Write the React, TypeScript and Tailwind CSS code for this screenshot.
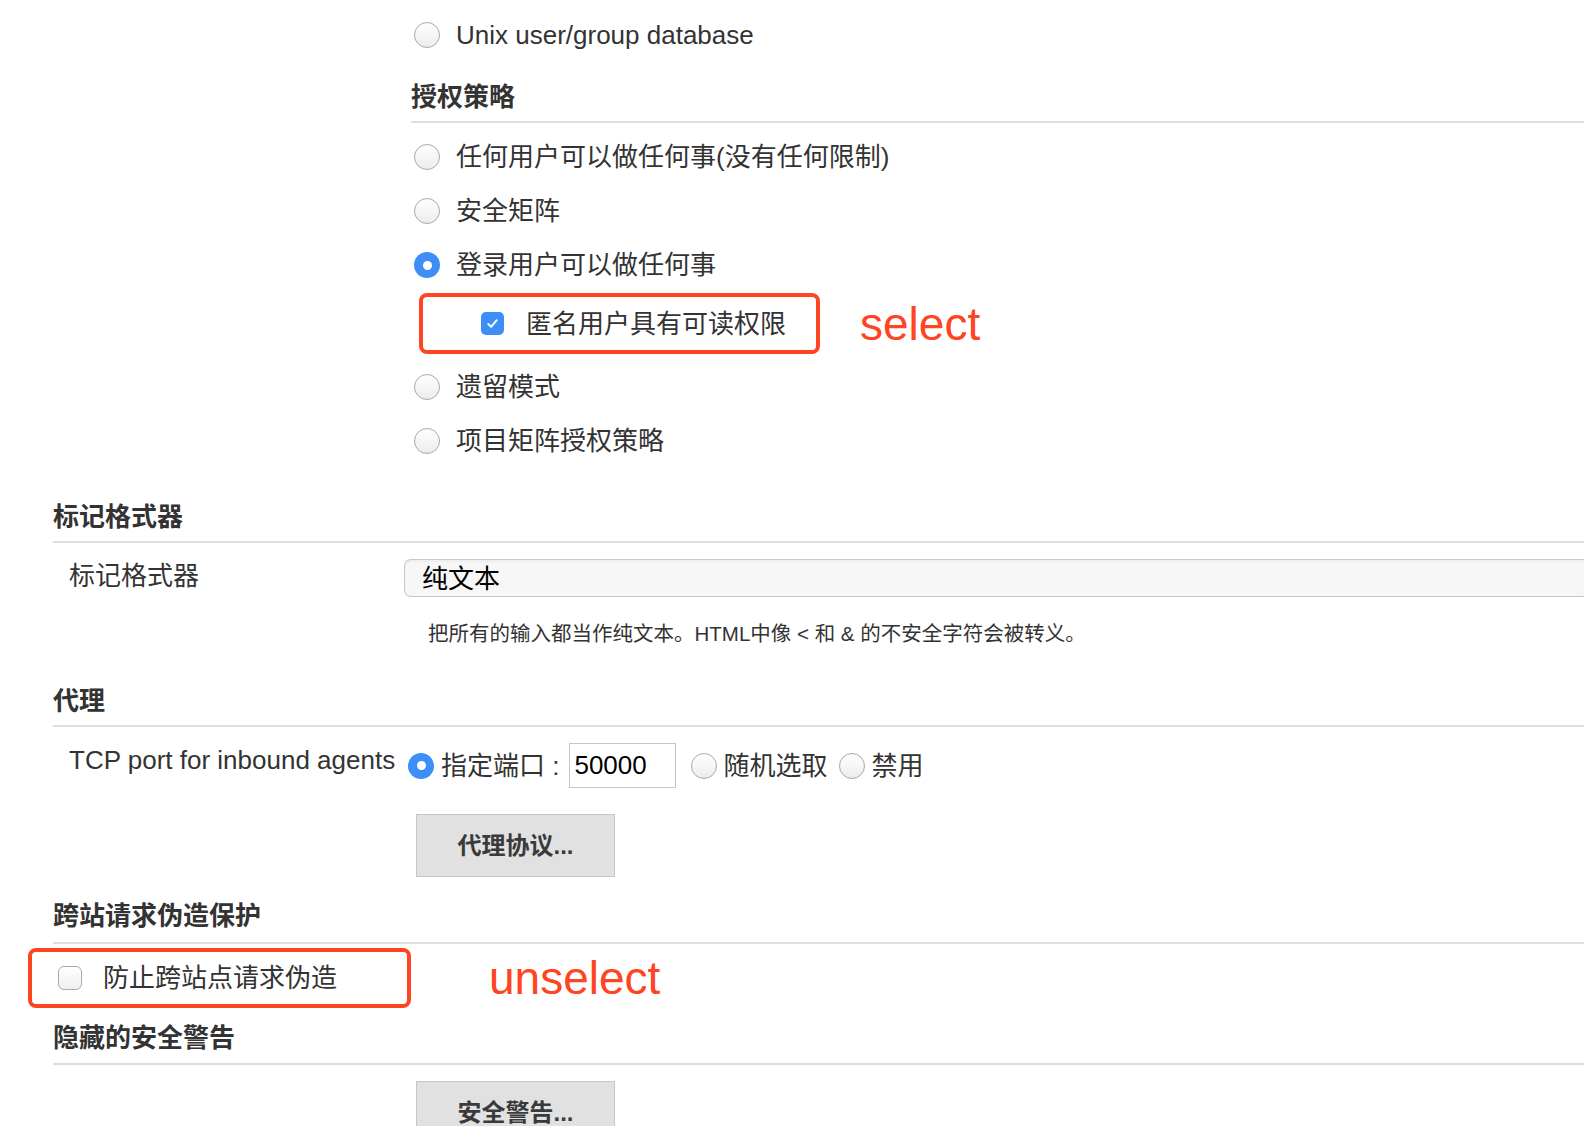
const Radio = ({ checked = false }: { checked?: boolean }) =>
  checked ? (
    <span className="w-[26px] h-[26px] rounded-full bg-[#3d8ef7] flex items-center justify-center shrink-0">
      <span className="block w-[9px] h-[9px] rounded-full bg-white" />
    </span>
  ) : (
    <span className="block w-[26px] h-[26px] rounded-full border border-[#a9a9a9] bg-linear-to-b from-white to-[#ececec] shrink-0" />
  );

const Checkbox = ({ checked = false }: { checked?: boolean }) =>
  checked ? (
    <span className="w-[23px] h-[23px] rounded-[5px] bg-[#3d8ef7] flex items-center justify-center shrink-0">
      <svg width="15" height="15" viewBox="0 0 16 16" fill="none">
        <path d="M3.5 8.5l3 3 6-7" stroke="white" strokeWidth="2" strokeLinecap="round" strokeLinejoin="round" />
      </svg>
    </span>
  ) : (
    <span className="block w-[24px] h-[24px] rounded-[6px] border border-[#ababab] bg-linear-to-b from-white to-[#efefef] shrink-0" />
  );

const RadioRow = ({ label, checked }: { label: string; checked?: boolean }) => (
  <div className="h-[54px] flex items-center">
    <span className="block ml-[3px]">
      <Radio checked={checked} />
    </span>
    <span className="ml-[16px] text-[26px] leading-[30px]">{label}</span>
  </div>
);

const Heading = ({ title, pt, pb = 'pb-[9px]' }: { title: string; pt: string; pb?: string }) => (
  <div className={`${pt} ${pb} border-b-2 border-[#dedede]`}>
    <h2 className="text-[26px] leading-[30px] font-bold">{title}</h2>
  </div>
);

const GrayButton = ({ label }: { label: string }) => (
  <div className="w-[199px] h-[63px] bg-[#e1e1e1] border border-[#c6c6c6] flex items-center justify-center text-[24px] font-bold text-[#3a3a3a]">
    {label}
  </div>
);

export default function App() {
  return (
    <div className="w-[1584px] h-[1126px] overflow-hidden bg-white text-[#333] font-['Liberation_Sans','Noto_Sans_CJK_SC',sans-serif]">
      {/* Security realm / authorization */}
      <div className="pl-[411px] pt-[8px]">
        <RadioRow label="Unix user/group database" />
        <Heading title="授权策略" pt="pt-[20px]" />
        <div className="mt-[7px]">
          <RadioRow label="任何用户可以做任何事(没有任何限制)" />
          <RadioRow label="安全矩阵" />
          <RadioRow label="登录用户可以做任何事" checked />
        </div>
        <div className="mt-[1px] flex items-center">
          <div className="ml-[8px] w-[401px] h-[61px] border-4 border-[#ff4421] rounded-[8px] flex items-center pl-[58px] gap-[22px]">
            <Checkbox checked />
            <span className="text-[26px] leading-[30px]">匿名用户具有可读权限</span>
          </div>
          <span className="ml-[40px] text-[46px] leading-[50px] text-[#ff4421]">select</span>
        </div>
        <div className="mt-[6px]">
          <RadioRow label="遗留模式" />
          <RadioRow label="项目矩阵授权策略" />
        </div>
      </div>

      <div className="pl-[53px]">
        {/* Markup formatter */}
        <Heading title="标记格式器" pt="pt-[34px]" />
        <div className="mt-[16px] flex items-start">
          <div className="w-[351px] pl-[16px] pt-[2px] text-[26px] leading-[30px]">标记格式器</div>
          <div className="flex-1 h-[38px] bg-[#f7f7f7] border border-r-0 border-[#c9c9c9] rounded-l-[7px] shadow-[inset_0_2px_2px_rgba(0,0,0,0.04)] pl-[17px] pt-[4px] text-[26px] leading-[30px] text-black">
            纯文本
          </div>
        </div>
        <p className="mt-[25px] ml-[375px] text-[20.5px] leading-[24px]">
          把所有的输入都当作纯文本。HTML中像 &lt; 和 &amp; 的不安全字符会被转义。
        </p>

        {/* Agents */}
        <Heading title="代理" pt="pt-[40px]" />
        <div className="mt-[16px] flex items-start">
          <div className="w-[351px] pl-[16px] pt-[2px] text-[26px] leading-[30px]">TCP port for inbound agents</div>
          <div className="flex items-center h-[45px] ml-[4px]">
            <Radio checked />
            <span className="ml-[7px] text-[26px] leading-[30px]">指定端口 :</span>
            <div className="ml-[10px] w-[107px] h-[45px] border border-[#c6c6c6] pl-[4px] flex items-center text-[26px] text-black">
              50000
            </div>
            <span className="block ml-[15px]">
              <Radio />
            </span>
            <span className="ml-[6px] text-[26px] leading-[30px]">随机选取</span>
            <span className="block ml-[12px]">
              <Radio />
            </span>
            <span className="ml-[6px] text-[26px] leading-[30px]">禁用</span>
          </div>
        </div>
        <div className="mt-[26px] ml-[363px]">
          <GrayButton label="代理协议..." />
        </div>

        {/* CSRF */}
        <Heading title="跨站请求伪造保护" pt="pt-[24px]" pb="pb-[11px]" />
        <div className="mt-[4px] flex items-center">
          <div className="-ml-[25px] w-[383px] h-[60px] border-4 border-[#ff4421] rounded-[8px] flex items-center pl-[26px] gap-[21px]">
            <Checkbox />
            <span className="text-[26px] leading-[30px]">防止跨站点请求伪造</span>
          </div>
          <span className="ml-[78px] text-[46px] leading-[50px] text-[#ff4421]">unselect</span>
        </div>

        {/* Hidden security warnings */}
        <Heading title="隐藏的安全警告" pt="pt-[15px]" pb="pb-[10px]" />
        <div className="mt-[16px] ml-[363px]">
          <GrayButton label="安全警告..." />
        </div>
      </div>
    </div>
  );
}
